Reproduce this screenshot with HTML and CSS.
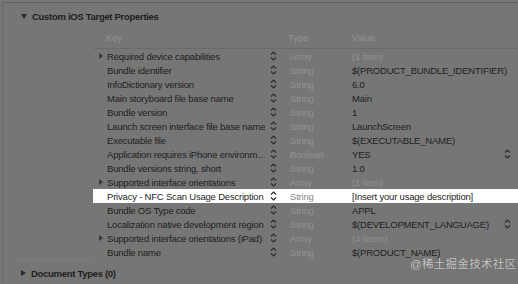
FILE: index.html
```html
<!DOCTYPE html>
<html>
<head>
<meta charset="utf-8">
<link rel="stylesheet" href="styles.css">
</head>
<body>
<div class="panel">
  <div class="section-title"><span class="tri-down"></span><span>Custom iOS Target Properties</span></div>
  <div class="table">
    <div class="head">
      <span class="h-key">Key</span>
      <span class="h-type">Type</span>
      <span class="h-value">Value</span>
    </div>
    <div class="row"><span class="disc"></span><span class="key">Required device capabilities</span><span class="step"><svg viewBox="0 0 7 12"><path d="M1 4.5L3.5 2L6 4.5M1 7.5L3.5 10L6 7.5"/></svg></span><span class="type">Array</span><span class="val dim">(1 item)</span><span></span></div>
    <div class="row"><span></span><span class="key">Bundle identifier</span><span class="step"><svg viewBox="0 0 7 12"><path d="M1 4.5L3.5 2L6 4.5M1 7.5L3.5 10L6 7.5"/></svg></span><span class="type">String</span><span class="val">$(PRODUCT_BUNDLE_IDENTIFIER)</span><span></span></div>
    <div class="row"><span></span><span class="key">InfoDictionary version</span><span class="step"><svg viewBox="0 0 7 12"><path d="M1 4.5L3.5 2L6 4.5M1 7.5L3.5 10L6 7.5"/></svg></span><span class="type">String</span><span class="val">6.0</span><span></span></div>
    <div class="row"><span></span><span class="key">Main storyboard file base name</span><span class="step"><svg viewBox="0 0 7 12"><path d="M1 4.5L3.5 2L6 4.5M1 7.5L3.5 10L6 7.5"/></svg></span><span class="type">String</span><span class="val">Main</span><span></span></div>
    <div class="row"><span></span><span class="key">Bundle version</span><span class="step"><svg viewBox="0 0 7 12"><path d="M1 4.5L3.5 2L6 4.5M1 7.5L3.5 10L6 7.5"/></svg></span><span class="type">String</span><span class="val">1</span><span></span></div>
    <div class="row"><span></span><span class="key">Launch screen interface file base name</span><span class="step"><svg viewBox="0 0 7 12"><path d="M1 4.5L3.5 2L6 4.5M1 7.5L3.5 10L6 7.5"/></svg></span><span class="type">String</span><span class="val">LaunchScreen</span><span></span></div>
    <div class="row"><span></span><span class="key">Executable file</span><span class="step"><svg viewBox="0 0 7 12"><path d="M1 4.5L3.5 2L6 4.5M1 7.5L3.5 10L6 7.5"/></svg></span><span class="type">String</span><span class="val">$(EXECUTABLE_NAME)</span><span></span></div>
    <div class="row"><span></span><span class="key">Application requires iPhone environm…</span><span class="step"><svg viewBox="0 0 7 12"><path d="M1 4.5L3.5 2L6 4.5M1 7.5L3.5 10L6 7.5"/></svg></span><span class="type">Boolean</span><span class="val">YES</span><span class="step"><svg viewBox="0 0 7 12"><path d="M1 4.5L3.5 2L6 4.5M1 7.5L3.5 10L6 7.5"/></svg></span></div>
    <div class="row"><span></span><span class="key">Bundle versions string, short</span><span class="step"><svg viewBox="0 0 7 12"><path d="M1 4.5L3.5 2L6 4.5M1 7.5L3.5 10L6 7.5"/></svg></span><span class="type">String</span><span class="val">1.0</span><span></span></div>
    <div class="row"><span class="disc"></span><span class="key">Supported interface orientations</span><span class="step"><svg viewBox="0 0 7 12"><path d="M1 4.5L3.5 2L6 4.5M1 7.5L3.5 10L6 7.5"/></svg></span><span class="type">Array</span><span class="val dim">(1 item)</span><span></span></div>
    <div class="row selected"><span></span><span class="key">Privacy - NFC Scan Usage Description</span><span class="step"><svg viewBox="0 0 7 12"><path d="M1 4.5L3.5 2L6 4.5M1 7.5L3.5 10L6 7.5"/></svg></span><span class="type">String</span><span class="val">[Insert your usage description]</span><span></span></div>
    <div class="row"><span></span><span class="key">Bundle OS Type code</span><span class="step"><svg viewBox="0 0 7 12"><path d="M1 4.5L3.5 2L6 4.5M1 7.5L3.5 10L6 7.5"/></svg></span><span class="type">String</span><span class="val">APPL</span><span></span></div>
    <div class="row"><span></span><span class="key">Localization native development region</span><span class="step"><svg viewBox="0 0 7 12"><path d="M1 4.5L3.5 2L6 4.5M1 7.5L3.5 10L6 7.5"/></svg></span><span class="type">String</span><span class="val">$(DEVELOPMENT_LANGUAGE)</span><span class="step"><svg viewBox="0 0 7 12"><path d="M1 4.5L3.5 2L6 4.5M1 7.5L3.5 10L6 7.5"/></svg></span></div>
    <div class="row"><span class="disc"></span><span class="key">Supported interface orientations (iPad)</span><span class="step"><svg viewBox="0 0 7 12"><path d="M1 4.5L3.5 2L6 4.5M1 7.5L3.5 10L6 7.5"/></svg></span><span class="type">Array</span><span class="val dim">(4 items)</span><span></span></div>
    <div class="row"><span></span><span class="key">Bundle name</span><span class="step"><svg viewBox="0 0 7 12"><path d="M1 4.5L3.5 2L6 4.5M1 7.5L3.5 10L6 7.5"/></svg></span><span class="type">String</span><span class="val">$(PRODUCT_NAME)</span><span></span></div>
  </div>
  <div class="divider"></div>
  <div class="section-title bottom"><span class="tri-right"></span><span>Document Types (0)</span></div>
  <div class="watermark">@稀土掘金技术社区</div>
</div>
</body>
</html>
```
FILE: styles.css
```css
* { box-sizing: border-box; }
html, body { margin: 0; padding: 0; }
body {
  width: 518px;
  height: 284px;
  overflow: hidden;
  background: #767676;
  font-family: "Liberation Sans", Arial, "Noto Sans CJK SC", sans-serif;
  color: #1e1e1e;
}
.panel {
  position: relative;
  margin: 2px 0 0 2px;
  height: 282px;
  border-top: 1px solid #626262;
  border-left: 1px solid #6a6a6a;
}
.section-title {
  display: flex;
  align-items: center;
  height: 24px;
  padding-top: 3px;
  padding-left: 18px;
  font-weight: bold;
  font-size: 9.5px;
  letter-spacing: -0.3px;
  gap: 5px;
}
.tri-down {
  width: 0; height: 0;
  border-left: 3px solid transparent;
  border-right: 3px solid transparent;
  border-top: 5px solid #2a2a2a;
}
.tri-right {
  width: 0; height: 0;
  border-top: 3px solid transparent;
  border-bottom: 3px solid transparent;
  border-left: 5px solid #2a2a2a;
}
.table {
  margin-left: 90px;
}
.head {
  display: grid;
  grid-template-columns: 14px 174px 71px 1fr;
  height: 22px;
  align-items: center;
  font-size: 9.5px;
  color: #929292;
  border-bottom: 1px solid #6a6a6a;
}
.h-key { grid-column: 2; margin-left: -1px; }
.h-type { grid-column: 3; margin-left: 7px; }
.h-value { grid-column: 4; }
.row {
  display: grid;
  grid-template-columns: 14px 158px 16px 71px 147px 16px;
  height: 14px;
  align-items: center;
  font-size: 9.5px;
  letter-spacing: -0.2px;
  white-space: nowrap;
}
.row.selected {
  background: #ffffff;
}
.disc {
  justify-self: center;
  margin-left: 2px;
  width: 0; height: 0;
  border-top: 3px solid transparent;
  border-bottom: 3px solid transparent;
  border-left: 4px solid #3a3a3a;
}
.key { overflow: hidden; }
.step {
  display: flex;
  justify-content: center;
  align-items: center;
}
.step svg {
  width: 7px;
  height: 12px;
  fill: none;
  stroke: #2a2a2a;
  stroke-width: 1.1;
}
.type { padding-left: 9px; color: #929292; }
.selected .type { color: #8a8a8a; }
.val { overflow: visible; }
.dim { color: #929292; }
.divider {
  margin: 0 0 0 15px;
  width: 75px;
  height: 1px;
  background: #7f7f7f;
}
.section-title.bottom {
  height: 22px;
  padding-top: 4px;
}
.watermark {
  position: absolute;
  left: 407px;
  top: 252px;
  font-size: 11.5px;
  color: rgba(235, 235, 235, 0.75);
  text-shadow: 0 0 1px rgba(60,60,60,0.6);
  letter-spacing: 0.3px;
}
```
